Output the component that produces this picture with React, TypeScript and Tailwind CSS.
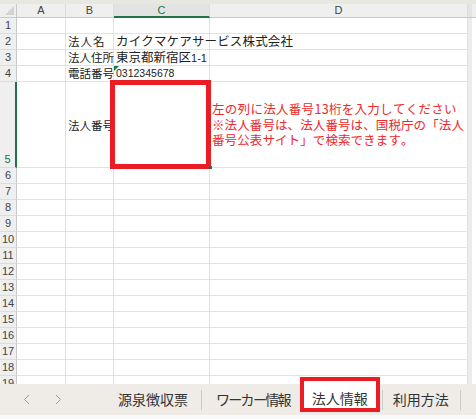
import React from "react";

const JP = "font-['Noto_Sans_CJK_JP','Noto_Sans',sans-serif] [font-kerning:none]";

const colClasses = [
  "w-[17px]",
  "w-[49px]",
  "w-[48px]",
  "w-[96px]",
  "w-[258px]",
];

type Cell = { text?: React.ReactNode; className?: string };

function SheetRow({
  num,
  height,
  cells,
  active,
}: {
  num: number;
  height: string;
  cells: Cell[];
  active?: boolean;
}) {
  return (
    <div className={`flex ${height} shrink-0`}>
      <div
        className={`${colClasses[0]} shrink-0 bg-[#efefef] border-b border-b-[#dcdcdc] flex items-end justify-center text-[11px] leading-[15px] font-['Liberation_Sans',sans-serif] ${
          active
            ? "border-r-2 border-r-[#217346] text-[#217346]"
            : "border-r border-r-[#c8c8c8] text-[#444]"
        }`}
      >
        {num}
      </div>
      {[1, 2, 3, 4].map((i) => (
        <div
          key={i}
          className={`${colClasses[i]} shrink-0 relative border-r border-b border-[#e2e2e2] flex items-center pl-[2px] whitespace-nowrap ${
            cells[i - 1]?.className ?? ""
          }`}
        >
          {cells[i - 1]?.text}
        </div>
      ))}
      <div className="w-[4px] shrink-0 bg-[#ececec]" />
      <div className="flex-1 bg-white" />
    </div>
  );
}

function Chevron({ dir }: { dir: "left" | "right" }) {
  return (
    <svg width="7" height="11" viewBox="0 0 7 11" fill="none">
      <path
        d={dir === "left" ? "M6 1 L1.5 5.5 L6 10" : "M1 1 L5.5 5.5 L1 10"}
        stroke="#9a9a9a"
        strokeWidth="1"
      />
    </svg>
  );
}

export default function App() {
  const label = `${JP} text-[11.5px] text-[#222] z-10`;
  const emptyRows = Array.from({ length: 14 }, (_, i) => i + 6);

  return (
    <div className="w-[476px] h-[419px] flex flex-col overflow-hidden bg-white">
      <div className="relative flex-1 flex flex-col overflow-hidden">
        <div className="h-[4px] shrink-0 bg-[#e7e8e0]" />
        {/* column header */}
        <div className="flex h-[14px] shrink-0 bg-[#efefef] font-['Liberation_Sans',sans-serif] text-[11px] text-[#444]">
          <div className={`${colClasses[0]} shrink-0 relative border-r border-b border-[#c8c8c8]`}>
            <div className="absolute right-[2px] bottom-[2px] w-0 h-0 border-l-[9px] border-l-transparent border-b-[9px] border-b-[#d4d4d4]" />
          </div>
          {["A", "B", "C", "D"].map((c, i) => (
            <div
              key={c}
              className={`${colClasses[i + 1]} shrink-0 flex items-center justify-center border-r border-r-[#dcdcdc] ${
                c === "C"
                  ? "border-b-2 border-b-[#217346] text-[#217346] bg-[#e3e3e3]"
                  : "border-b border-b-[#c8c8c8]"
              }`}
            >
              {c}
            </div>
          ))}
          <div className="w-[4px] shrink-0 bg-[#e4e4e4] border-b border-b-[#c8c8c8]" />
          <div className="flex-1 border-b border-b-[#c8c8c8]" />
        </div>

        <SheetRow num={1} height="h-[16px]" cells={[]} />
        <SheetRow
          num={2}
          height="h-[16px]"
          cells={[
            {},
            { text: <span className="tracking-[1px]">法人名</span>, className: label },
            {
              text: (
                <span className={`${JP} text-[12.5px] text-[#222] tracking-[0.15px] relative z-10`}>
                  カイクマケアサービス株式会社
                </span>
              ),
              className: "overflow-visible",
            },
          ]}
        />
        <SheetRow
          num={3}
          height="h-[16px]"
          cells={[
            {},
            { text: "法人住所", className: label },
            {
              text: (
                <span className={`${JP} text-[12.5px] text-[#222]`}>
                  東京都新宿区
                  <span className="font-['Liberation_Sans',sans-serif] text-[11px]">1-1</span>
                </span>
              ),
            },
          ]}
        />
        <SheetRow
          num={4}
          height="h-[16px]"
          cells={[
            {},
            { text: "電話番号", className: label },
            {
              text: (
                <>
                  <div className="absolute top-0 left-0 w-0 h-0 border-t-[5px] border-t-[#1f7a3f] border-r-[5px] border-r-transparent" />
                  <span className="font-['Liberation_Sans',sans-serif] text-[10.5px] text-[#222]">
                    0312345678
                  </span>
                </>
              ),
            },
          ]}
        />
        <SheetRow
          num={5}
          height="h-[86px]"
          active
          cells={[
            {},
            { text: <span className="mt-[3px]">法人番号</span>, className: label },
            {},
            {
              text: (
                <div className={`${JP} text-[12.5px] leading-[15.5px] text-[#f02828] tracking-[0.1px]`}>
                  <div className="tracking-[0.3px]">左の列に法人番号13桁を入力してください</div>
                  <div>※法人番号は、法人番号は、国税庁の「法人</div>
                  <div>番号公表サイト」で検索できます。</div>
                </div>
              ),
            },
          ]}
        />
        {emptyRows.map((n) => (
          <SheetRow key={n} num={n} height="h-[16px]" cells={[]} />
        ))}

        {/* red frame around C5 */}
        <div className="absolute left-[110px] top-[80px] w-[101px] h-[89px] border-[5px] border-[#ec1c24] z-20" />
        <div className="absolute left-[209px] top-[166px] w-[3px] h-[3px] bg-[#217346] z-20" />
      </div>

      {/* sheet tabs */}
      <div className={`h-[31px] shrink-0 bg-[#efebe7] flex items-center ${JP} text-[14px] text-[#333]`}>
        <div className="w-[105px] shrink-0 flex items-center">
          <div className="ml-[23px]">
            <Chevron dir="left" />
          </div>
          <div className="ml-[25px]">
            <Chevron dir="right" />
          </div>
        </div>
        <div className="pl-[13px] pr-[13px] whitespace-nowrap">源泉徴収票</div>
        <div className="w-px h-[20px] bg-[#cfcbc7]" />
        <div className="pl-[14px] pr-[10px] whitespace-nowrap tracking-[-1.7px]">ワーカー情報</div>
        <div className="relative h-[28px] self-start w-[80px] bg-white flex items-center justify-center whitespace-nowrap">
          法人情報
          <div className="absolute left-0 -top-[7px] w-[80px] h-[35px] border-[4px] border-[#ec1c24]" />
        </div>
        <div className="ml-[2px] w-px h-[20px] bg-[#cfcbc7]" />
        <div className="pl-[10px] pr-[11px] whitespace-nowrap">利用方法</div>
        <div className="w-px h-[20px] bg-[#cfcbc7]" />
      </div>
      <div className="h-[4px] shrink-0 bg-[#f9f9f9]" />
    </div>
  );
}
